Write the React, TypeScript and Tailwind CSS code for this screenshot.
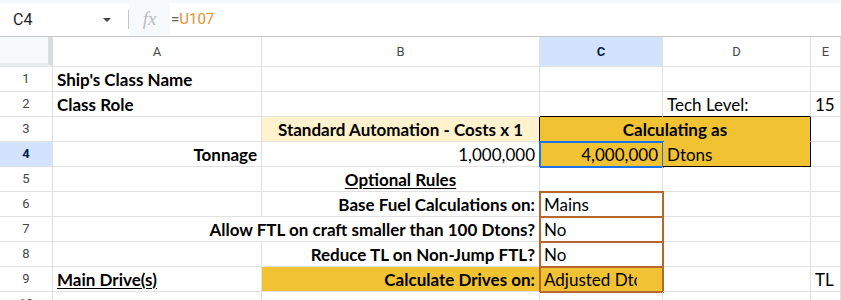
import clsx from 'clsx';

const cn = clsx;
const gold = 'bg-[#f1c232]';

function Hd({ children, className }: { children?: React.ReactNode; className?: string }) {
  return (
    <div
      className={cn(
        'flex items-center justify-center border-r border-b border-[#e1e1e1] text-[13px] font-["Roboto",sans-serif]',
        className ?? 'bg-white text-[#444746]',
      )}
    >
      {children}
    </div>
  );
}

function Num({ n, active }: { n: number; active?: boolean }) {
  return (
    <div
      className={cn(
        'flex items-center justify-center border-r border-b border-[#e1e1e1] text-[13px] font-["Roboto",sans-serif]',
        active ? 'bg-[#d3e3fd] font-bold text-[#041e49]' : 'bg-white text-[#444746]',
      )}
    >
      {n}
    </div>
  );
}

function Cell({
  children,
  className,
  spill,
}: {
  children?: React.ReactNode;
  className?: string;
  spill?: boolean;
}) {
  return (
    <div
      className={cn(
        'flex items-end whitespace-nowrap border-r border-b border-[#e1e1e1] px-[4px] pb-[1px] text-[17px] leading-[20px] text-black',
        spill ? 'overflow-visible' : 'overflow-hidden',
        className,
      )}
    >
      {children}
    </div>
  );
}

const brown = 'outline-2 -outline-offset-1 outline-[#b8652e]';

export default function App() {
  return (
    <div className='h-[300px] w-[841px] overflow-hidden bg-white font-["Lato",sans-serif]'>
      {/* formula bar */}
      <div className="h-[3px] bg-[#f6f8fa]" />
      <div className="flex h-[34px] items-stretch border-b border-[#c7c7c7]">
        <div className='flex w-[128px] items-center pl-[13px] pr-[17px] font-["Roboto",sans-serif] text-[16px] text-[#1f1f1f]'>
          <span className="flex-1">C4</span>
          <svg width="8" height="4" viewBox="0 0 8 4">
            <path d="M0 0h8L4 4z" fill="#444746" />
          </svg>
        </div>
        <div className="my-[7px] w-px bg-[#c4c7c5]" />
        <div className="-mt-[3px] flex w-[41px] items-center justify-center bg-[#f8f9fa] pt-[3px]">
          <span className='font-["Liberation_Serif",serif] text-[19px] italic text-[#b9bcbf]'>fx</span>
        </div>
        <div className='flex items-center pl-[1px] font-["Roboto",sans-serif] text-[15px]'>
          <span className="text-[#5f6368]">=</span>
          <span className="text-[#e8912d]">U107</span>
        </div>
      </div>

      {/* sheet grid */}
      <div className="grid grid-cols-[53px_209px_278px_123px_148px_1fr] grid-rows-[30px_repeat(10,25px)]">
        {/* header row */}
        <div className="border-r-[5px] border-b-[4px] border-r-[#dadce0] border-b-[#e8eaed] bg-[#f8f9fa]" />
        <Hd>A</Hd>
        <Hd>B</Hd>
        <Hd className="bg-[#d3e3fd] font-bold text-[#041e49]">C</Hd>
        <Hd>D</Hd>
        <Hd>E</Hd>

        {/* 1 */}
        <Num n={1} />
        <Cell className="font-bold">Ship's Class Name</Cell>
        <Cell />
        <Cell />
        <Cell />
        <Cell />

        {/* 2 */}
        <Num n={2} />
        <Cell className="font-bold">Class Role</Cell>
        <Cell />
        <Cell className="border-b-black" />
        <Cell className="border-b-black">Tech Level:</Cell>
        <Cell>15</Cell>

        {/* 3 */}
        <Num n={3} />
        <Cell />
        <Cell className="justify-center border-r-black bg-[#fff2cc] font-bold">Standard Automation - Costs x 1</Cell>
        <Cell className={cn('col-span-2 justify-center border-r-black border-b-[#f1c232] font-bold', gold)}>
          Calculating as
        </Cell>
        <Cell />

        {/* 4 */}
        <Num n={4} active />
        <Cell className="justify-end font-bold">Tonnage</Cell>
        <Cell className="justify-end border-r-black">1,000,000</Cell>
        <Cell className={cn('justify-end border-b-black outline-2 -outline-offset-1 outline-[#1a73e8]', gold)}>
          4,000,000
        </Cell>
        <Cell className={cn('border-r-black border-b-black', gold)}>Dtons</Cell>
        <Cell />

        {/* 5 */}
        <Num n={5} />
        <Cell />
        <Cell className="justify-center font-bold underline underline-offset-2">Optional Rules</Cell>
        <Cell />
        <Cell />
        <Cell />

        {/* 6 */}
        <Num n={6} />
        <Cell />
        <Cell className="justify-end font-bold">Base Fuel Calculations on:</Cell>
        <Cell className={brown}>Mains</Cell>
        <Cell />
        <Cell />

        {/* 7 - label spills left into the empty A cell */}
        <Num n={7} />
        <Cell className="border-r-transparent" />
        <Cell spill className="justify-end font-bold">
          Allow FTL on craft smaller than 100 Dtons?
        </Cell>
        <Cell className={brown}>No</Cell>
        <Cell />
        <Cell />

        {/* 8 */}
        <Num n={8} />
        <Cell />
        <Cell className="justify-end font-bold">Reduce TL on Non-Jump FTL?</Cell>
        <Cell className={brown}>No</Cell>
        <Cell />
        <Cell />

        {/* 9 */}
        <Num n={9} />
        <Cell className="font-bold underline underline-offset-2">Main Drive(s)</Cell>
        <Cell className={cn('justify-end font-bold', gold)}>Calculate Drives on:</Cell>
        <Cell className={cn(brown, gold)}>
          <span className="block w-[93px] overflow-hidden">Adjusted Dtons</span>
        </Cell>
        <Cell />
        <Cell>TL</Cell>

        {/* 10 */}
        <Num n={10} />
        <Cell />
        <Cell />
        <Cell />
        <Cell />
        <Cell />
      </div>
    </div>
  );
}
